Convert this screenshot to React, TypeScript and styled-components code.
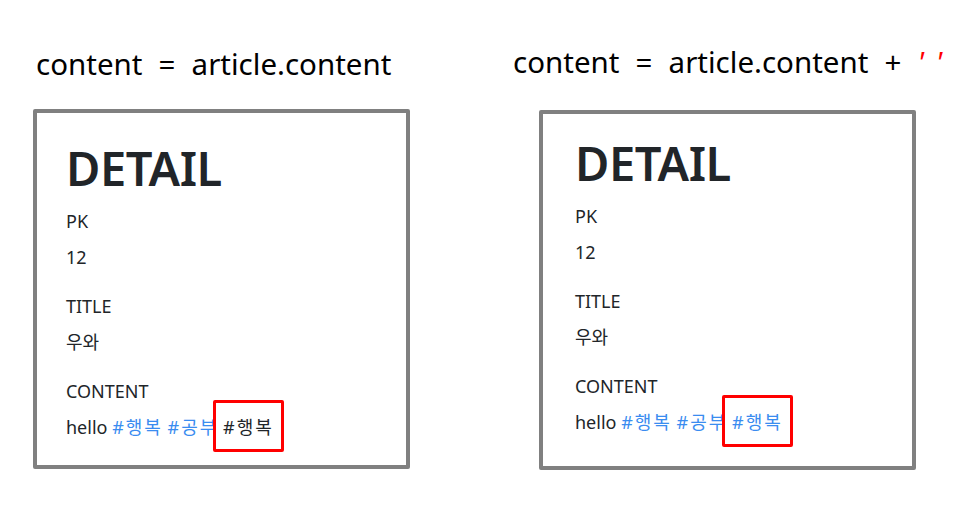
import React from "react";
import styled, { createGlobalStyle } from "styled-components";

const Global = createGlobalStyle`
  html, body { margin: 0; padding: 0; background: #ffffff; }
  body { font-family: "Noto Sans", "Noto Sans CJK KR", sans-serif; }
`;

const Page = styled.div`
  display: flex;
  align-items: flex-start;
  width: 977px;
  height: 516px;
  padding-left: 33px;
  box-sizing: border-box;
`;

const Column = styled.section<{ $gapLeft: number; $top: number }>`
  display: flex;
  flex-direction: column;
  margin-left: ${(p) => p.$gapLeft}px;
  padding-top: ${(p) => p.$top}px;
`;

const Caption = styled.div<{ $indent: number; $below: number }>`
  font-size: 29.5px;
  line-height: 40px;
  word-spacing: 8.5px;
  color: #000000;
  white-space: nowrap;
  margin-left: ${(p) => p.$indent}px;
  margin-bottom: ${(p) => p.$below}px;
`;

const Quote = styled.span`
  color: #ff0000;
  font-style: italic;
  word-spacing: 4px;
`;

const Box = styled.div<{ $top: number; $inset: number }>`
  width: 377px;
  height: 360px;
  box-sizing: border-box;
  border: 4px solid #808080;
  border-radius: 2px;
  padding: ${(p) => p.$top}px 0 0 ${(p) => p.$inset}px;
  color: #212529;
`;

const Heading = styled.h1`
  margin: 0 0 11px;
  font-size: 47px;
  line-height: 48px;
  font-weight: 600;
  letter-spacing: -0.5px;
`;

const Field = styled.div`
  margin-bottom: 13px;
`;

const Label = styled.div`
  font-size: 18px;
  line-height: 36px;
`;

const Value = styled.div`
  font-size: 18px;
  line-height: 36px;
`;

const Tag = styled.span<{ $plain?: boolean }>`
  color: ${(p) => (p.$plain ? "#212529" : "#3a8cf0")};
  letter-spacing: 2px;
`;

const Marked = styled.span`
  position: relative;

  &::after {
    content: "";
    position: absolute;
    left: -10px;
    right: -10px;
    top: -15px;
    bottom: -13px;
    border: 3px solid #ff0000;
    border-radius: 2px;
  }
`;

type Panel = {
  caption: React.ReactNode;
  indent: number;
  gapLeft: number;
  top: number;
  below: number;
  boxTop: number;
  boxInset: number;
  lastPlain: boolean;
};

const panels: Panel[] = [
  {
    caption: "content = article.content",
    indent: 3,
    gapLeft: 0,
    top: 44,
    below: 25,
    boxTop: 31,
    boxInset: 29,
    lastPlain: true,
  },
  {
    caption: (
      <>
        content = article.content + <Quote>' '</Quote>
      </>
    ),
    indent: -26,
    gapLeft: 129,
    top: 42,
    below: 28,
    boxTop: 25,
    boxInset: 32,
    lastPlain: false,
  },
];

export default function App() {
  return (
    <>
      <Global />
      <Page>
        {panels.map((p, i) => (
          <Column key={i} $gapLeft={p.gapLeft} $top={p.top}>
            <Caption $indent={p.indent} $below={p.below}>
              {p.caption}
            </Caption>
            <Box $top={p.boxTop} $inset={p.boxInset}>
              <Heading>DETAIL</Heading>
              <Field>
                <Label>PK</Label>
                <Value>12</Value>
              </Field>
              <Field>
                <Label>TITLE</Label>
                <Value>우와</Value>
              </Field>
              <Field>
                <Label>CONTENT</Label>
                <Value>
                  hello <Tag>#행복</Tag> <Tag>#공부</Tag>{" "}
                  <Marked>
                    <Tag $plain={p.lastPlain}>#행복</Tag>
                  </Marked>
                </Value>
              </Field>
            </Box>
          </Column>
        ))}
      </Page>
    </>
  );
}
